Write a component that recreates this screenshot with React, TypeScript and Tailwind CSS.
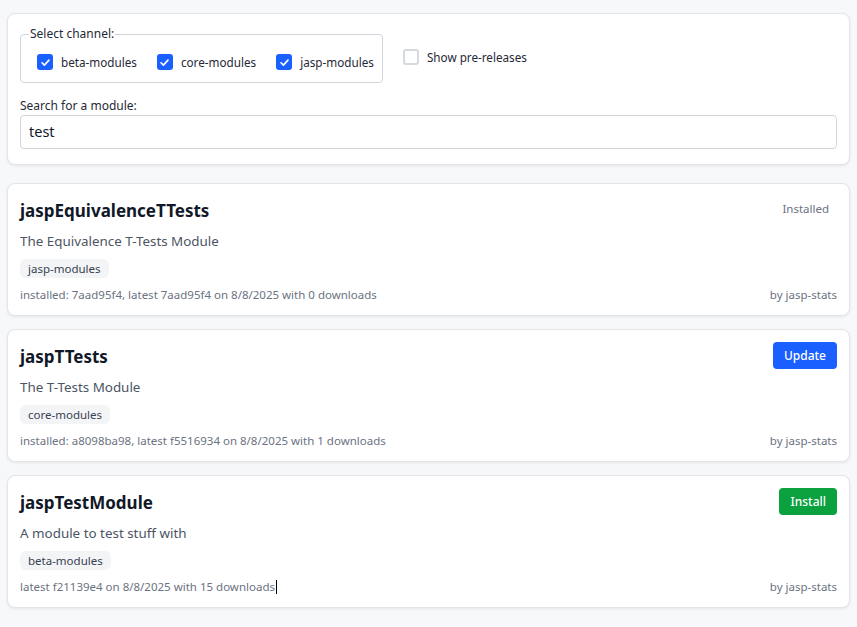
import React from "react";

const font = { fontFamily: '"Noto Sans", "Open Sans", sans-serif' };

function Check({ checked }: { checked: boolean }) {
  if (checked) {
    return (
      <span className="flex h-4 w-4 shrink-0 items-center justify-center rounded-[3px] bg-[#1a5fff]">
        <svg width="11" height="11" viewBox="0 0 12 12" fill="none">
          <path d="M2.2 6.3 L4.8 8.8 L9.8 3.4" stroke="white" strokeWidth="1.8" strokeLinecap="round" strokeLinejoin="round" />
        </svg>
      </span>
    );
  }
  return <span className="h-4 w-4 shrink-0 rounded-[3px] border-2 border-[#d4d8df] bg-white" />;
}

type Mod = {
  name: string;
  desc: string;
  tag: string;
  info: string;
  action: "installed" | "update" | "install";
  caret?: boolean;
};

const mods: Mod[] = [
  {
    name: "jaspEquivalenceTTests",
    desc: "The Equivalence T-Tests Module",
    tag: "jasp-modules",
    info: "installed: 7aad95f4, latest 7aad95f4 on 8/8/2025 with 0 downloads",
    action: "installed",
  },
  {
    name: "jaspTTests",
    desc: "The T-Tests Module",
    tag: "core-modules",
    info: "installed: a8098ba98, latest f5516934 on 8/8/2025 with 1 downloads",
    action: "update",
  },
  {
    name: "jaspTestModule",
    desc: "A module to test stuff with",
    tag: "beta-modules",
    info: "latest f21139e4 on 8/8/2025 with 15 downloads",
    action: "install",
    caret: true,
  },
];

function Card({ m }: { m: Mod }) {
  return (
    <div className="rounded-lg border border-[#e3e5e9] bg-white px-3 pt-3 pb-3 shadow-[0_1px_3px_rgba(0,0,0,0.08)]">
      <div className="flex h-7 items-start justify-between">
        <div className="pt-px text-[17px] font-bold leading-7 text-[#111827]">{m.name}</div>
        {m.action === "installed" && (
          <div className="pr-2 pt-[5px] text-[11.5px] leading-4 text-[#6b7280]">Installed</div>
        )}
        {m.action === "update" && (
          <button className="h-[27px] rounded-[4px] bg-[#1a5fff] px-[11px] text-[12px] font-medium text-white">Update</button>
        )}
        {m.action === "install" && (
          <button className="h-[27px] rounded-[4px] bg-[#0aa13e] px-[11px] text-[12px] font-medium text-white">Install</button>
        )}
      </div>
      <div className="mt-[7px] text-[13.4px] leading-5 text-[#4b5563]">{m.desc}</div>
      <div className="mt-2 flex">
        <span className="flex h-[19px] items-center rounded-md bg-[#f3f4f6] px-2 text-[11.5px] leading-4 text-[#374151]">{m.tag}</span>
      </div>
      <div className="mt-[9px] flex items-center justify-between text-[11.5px] leading-4 text-[#6b7280]">
        <span className="flex items-center">
          {m.info}
          {m.caret && <span className="ml-px inline-block h-[14px] w-px bg-black" />}
        </span>
        <span>by jasp-stats</span>
      </div>
    </div>
  );
}

export default function App() {
  return (
    <div className="min-h-[627px] bg-[#f7f8fa] pl-[7px] pr-[7px] pt-[13px] pb-4" style={font}>
      <div className="rounded-lg border border-[#e3e5e9] bg-white px-3 pt-3 pb-[15px] shadow-[0_1px_3px_rgba(0,0,0,0.08)]">
        <div className="flex items-center gap-5">
          <fieldset className="rounded-[4px] border border-[#d1d5db] pl-4 pr-2 pb-[10px] pt-[10px]">
            <legend className="-ml-[8px] px-px text-[12px] leading-4 text-[#1f2937]">Select channel:</legend>
            <div className="flex items-center gap-5">
              {["beta-modules", "core-modules", "jasp-modules"].map((c) => (
                <label key={c} className="flex items-center gap-2 text-[11.7px] leading-5 text-[#1f2937]">
                  <Check checked />
                  {c}
                </label>
              ))}
            </div>
          </fieldset>
          <label className="mt-1 flex items-center gap-2 text-[11.7px] leading-5 text-[#1f2937]">
            <Check checked={false} />
            Show pre-releases
          </label>
        </div>
        <div className="mt-[15px] text-[12px] leading-4 text-[#1f2937]">Search for a module:</div>
        <div className="mt-px flex h-[34px] items-center rounded-[4px] border border-[#d1d5db] px-2 text-[14.5px] text-[#111827]">
          test
        </div>
      </div>
      <div className="mt-[18px] flex flex-col gap-[13px]">
        {mods.map((m) => (
          <Card key={m.name} m={m} />
        ))}
      </div>
    </div>
  );
}
